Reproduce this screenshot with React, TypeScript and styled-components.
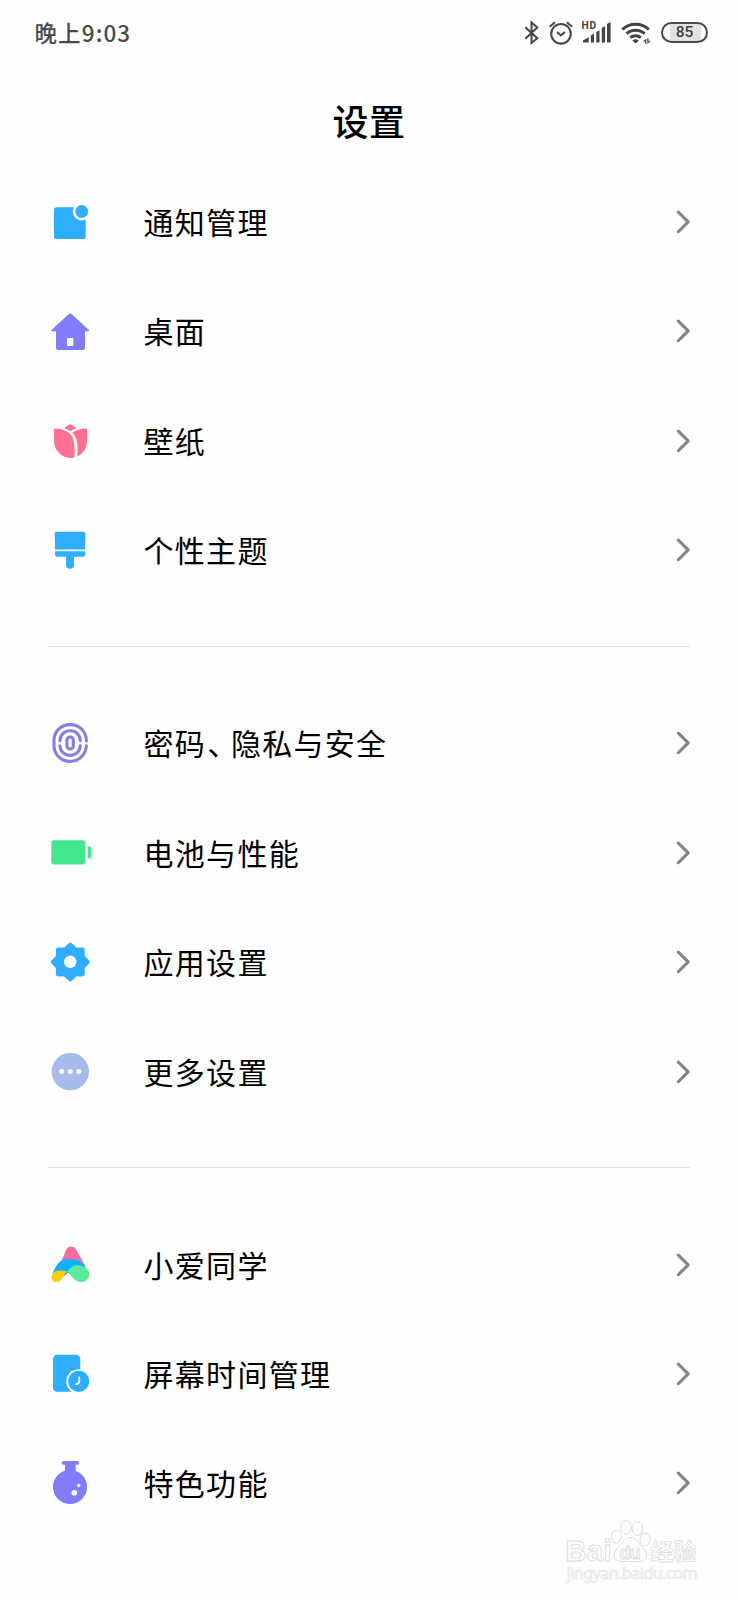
import React from 'react';
import styled, { createGlobalStyle } from 'styled-components';

const GlobalStyle = createGlobalStyle`
  * { box-sizing: border-box; }
  body {
    margin: 0;
    background: #fefefe;
    font-family: "Noto Sans CJK SC", sans-serif;
    color: #000;
  }
`;

const Screen = styled.main`
  position: relative;
  width: 738px;
  height: 1600px;
  overflow: hidden;
  background: #fefefe;
`;

const StatusBar = styled.header`
  display: flex;
  justify-content: space-between;
  align-items: flex-start;
  height: 66px;
  padding: 20px 30px 0 34.5px;
`;

const Clock = styled.span`
  margin-top: -1px;
  font-size: 22.5px;
  line-height: 26px;
  font-weight: 500;
  letter-spacing: 1.1px;
  color: #4a4a4a;
`;

const StatusIcons = styled.div`
  display: flex;
  gap: 9px;
  svg { display: block; }
`;

const BatteryPill = styled.div`
  display: flex;
  align-items: center;
  justify-content: center;
  width: 47px;
  height: 21px;
  margin-top: 2px;
  border: 2px solid #4a4a4a;
  border-radius: 11px;
  background: linear-gradient(to right, transparent 7px, #e2e2e2 7px, #e2e2e2 38px, transparent 38px);
  font: 500 15.5px/17px Roboto, sans-serif;
  color: #404040;
`;

const Title = styled.h1`
  height: 101.3px;
  margin: 0;
  padding-top: 26.5px;
  text-align: center;
  font-size: 36px;
  line-height: 54px;
  letter-spacing: 0.4px;
  font-weight: 500;
`;

const Row = styled.div`
  display: flex;
  align-items: center;
  height: 109.4px;
  padding: 0 46px;
  svg { display: block; flex: none; }
`;

const Label = styled.span`
  flex: 1;
  margin: -2px 0 0 49.5px;
  font-size: 30px;
  line-height: 44px;
  letter-spacing: 1.3px;
  font-weight: 400;
`;

const TightMark = styled.span`
  margin: 0 7px 0 1.5px;
  font-feature-settings: "halt";
`;

const Divider = styled.hr`
  height: 1px;
  margin: 41px 48px 41.8px;
  border: 0;
  background: #e4e4e4;
`;

const Watermark = styled.svg`
  position: absolute;
  left: 560px;
  top: 1515px;
`;

const BLUE = '#2fadff';
const VIOLET = '#817df9';

const Glyph = ({ children }: { children: React.ReactNode }) => (
  <svg width="48" height="48" viewBox="0 0 48 48">{children}</svg>
);

const icons: Record<string, React.ReactNode> = {
  notify: (
    <>
      <rect x="8" y="9.3" width="31.7" height="31.7" rx="2.6" fill={BLUE} />
      <circle cx="35.7" cy="13.5" r="9" fill="#fefefe" />
      <circle cx="35.7" cy="13.5" r="6.4" fill={BLUE} />
    </>
  ),
  home: (
    <>
      <path
        d="M22.9 6.9Q24.2 5.9 25.5 6.9L43 23Q43.700 24.100 42.500 24.300H39V40.800Q39 43 36.800 43H12.200Q10 43 10 40.800V24.300H6Q4.700 24.100 5.400 23Z"
        fill={VIOLET}
      />
      <rect x="21" y="30.9" width="6.3" height="8" rx="1.2" fill="#fff" />
    </>
  ),
  tulip: (
    <g fill="#ff7092">
      <path d="M8 12.600Q8 11.300 9.300 11.400C17 12 24 14.500 26.600 20.500C28.700 26 29.200 34 28.200 40.800C17 42.200 8 34.500 8 24Z" />
      <path d="M26.400 15.800C29.500 12.800 34 11.600 39.800 11.400Q41 11.300 41 12.600V24C41 31 37.500 36.500 31 39.500C31.900 33 31.800 27 30.400 22.500Q29.200 18.500 26.400 15.800Z" />
      <path d="M18 11.300L22.600 7.700Q24 6.700 25.400 7.700L30.200 11.200Q27 12.200 24.500 14.300Q21.500 12.200 18 11.300Z" />
    </g>
  ),
  brush: (
    <g fill={BLUE}>
      <path d="M10.700 5.700H37.300Q39.400 5.700 39.400 7.800L39 23.600H9.100L8.700 7.800Q8.700 5.700 10.700 5.700Z" />
      <path d="M9.100 25.200H39.200V28.700Q39.200 30.800 37.100 30.800H28V38.700A4 4 0 0 1 20 38.700V30.800H11.200Q9.100 30.800 9.100 28.700Z" />
    </g>
  ),
  finger: (
    <g fill="none" stroke="#8580de" strokeWidth="3.100" strokeLinecap="round" transform="translate(0 0.500)">
      <path d="M40.400 21.500C40.400 12 33.300 5.100 24.200 5.100S8 12 8 21V26C8 35 15.100 41.900 24.200 41.900C32.500 41.900 39.400 36 40.400 26.300" />
      <path d="M13.900 21.300C13.900 15.500 18.300 11.300 24.100 11.300S34.300 15.500 34.300 21.300" />
      <path d="M13.900 26.300C14.200 32 18.500 35.900 24.100 35.900S34 32 34.300 26.300" />
      <rect x="20.900" y="17.500" width="6.400" height="12" rx="3.200" />
    </g>
  ),
  battery: (
    <g fill="#43e58d">
      <rect x="5.300" y="11.200" width="33.700" height="24.300" rx="2.700" />
      <rect x="41.700" y="17.200" width="3.300" height="12.300" rx="1.500" />
    </g>
  ),
  gear: (
    <>
      <path
        d="M12 9.600H18.300L22.700 5.200Q24.300 3.800 25.900 5.200L30.300 9.600H36.600Q38.700 9.600 38.700 11.700V18L43.100 22.400Q44.500 24 43.100 25.600L38.700 30V36.300Q38.700 38.400 36.600 38.400H30.300L25.900 42.800Q24.300 44.200 22.700 42.800L18.300 38.400H12Q9.900 38.400 9.900 36.300V30L5.500 25.600Q4.100 24 5.500 22.400L9.900 18V11.700Q9.900 9.600 12 9.600Z"
        fill={BLUE}
      />
      <circle cx="24.200" cy="23.800" r="6.200" fill="#fff" />
    </>
  ),
  more: (
    <>
      <circle cx="24.300" cy="23.600" r="18.700" fill="#a6bbe9" />
      <g fill="#fff">
        <circle cx="15.700" cy="23.600" r="2.500" />
        <circle cx="24.200" cy="23.600" r="2.500" />
        <circle cx="32.800" cy="23.600" r="2.500" />
      </g>
    </>
  ),
  assistant: (
    <g transform="translate(0 -0.600)">
      <path d="M14 24L20 9.800Q21.500 6.200 25.200 6.200T30.500 9.800L39.500 26L37 28Z" fill="#fc6ba3" />
      <path d="M6.500 32.500C10 26 13 18.300 22 18.300C30 18.200 36 20.500 39.600 26.500L36 33L24 30.500L14 39Z" fill="#0eb2fb" />
      <path d="M20.800 31.400C25.500 25.500 30 23.500 35 25.300C40 26.500 43.400 29.500 43.300 33.500C43.300 38.500 39.500 41.700 35 41.700C28.500 41.700 26 35 20.800 31.400Z" fill="#5bea9b" />
      <path d="M20.800 31.400C18 29.600 10.500 29.300 7.800 31.800C5.500 34.500 5 38 6.500 40C8 42 12 42.200 14.500 40C16.800 38 18.500 33.500 20.800 31.400Z" fill="#fbcb12" />
    </g>
  ),
  screen: (
    <g transform="translate(0 -0.300)">
      <rect x="7" y="5" width="27.300" height="37" rx="4.300" fill={BLUE} />
      <circle cx="32.600" cy="31.800" r="12.300" fill="#fefefe" />
      <circle cx="32.800" cy="31.600" r="10.600" fill={BLUE} />
      <path d="M33.300 27.600V31Q33.300 34.200 30 34.400" fill="none" stroke="#fff" strokeWidth="1.800" strokeLinecap="round" />
    </g>
  ),
  flask: (
    <>
      <g fill={VIOLET}>
        <rect x="15.700" y="2" width="17.300" height="3.800" rx="1.900" />
        <rect x="19" y="3" width="10.700" height="12" />
        <circle cx="24" cy="28" r="17.100" />
      </g>
      <circle cx="28.300" cy="33.700" r="2.800" fill="#fff" />
      <circle cx="32.700" cy="26.500" r="1.700" fill="#fff" />
    </>
  ),
};

const groups: { icon: string; label: React.ReactNode }[][] = [
  [
    { icon: 'notify', label: '通知管理' },
    { icon: 'home', label: '桌面' },
    { icon: 'tulip', label: '壁纸' },
    { icon: 'brush', label: '个性主题' },
  ],
  [
    { icon: 'finger', label: <>密码<TightMark>、</TightMark>隐私与安全</> },
    { icon: 'battery', label: '电池与性能' },
    { icon: 'gear', label: '应用设置' },
    { icon: 'more', label: '更多设置' },
  ],
  [
    { icon: 'assistant', label: '小爱同学' },
    { icon: 'screen', label: '屏幕时间管理' },
    { icon: 'flask', label: '特色功能' },
  ],
];

const Chevron = () => (
  <svg width="16" height="26" viewBox="0 0 16 26">
    <path d="M2.300 3.100L12.200 12.900L2.300 22.700" fill="none" stroke="#838383" strokeWidth="3" strokeLinecap="round" strokeLinejoin="round" />
  </svg>
);

const StatusGlyphs = () => (
  <StatusIcons>
    <svg width="15" height="26" viewBox="0 0 15 26" fill="none" stroke="#444" strokeWidth="2">
      <path d="M1.300 7.200L13.300 18.300L7.500 23V2.500L13.300 7.500L1.300 18.700" />
    </svg>
    <svg width="25" height="26" viewBox="0 0 25 26" fill="none" stroke="#4a4a4a" strokeWidth="2.100">
      <circle cx="13" cy="13.800" r="9.800" />
      <path d="M1.600 6.800L7 2.200M18.800 2.200L24.200 6.800" />
      <path d="M9 12L12.800 15.300L16.900 12.200" />
    </svg>
    <svg width="30" height="26" viewBox="0 0 30 26" fill="#444">
      <text x="-0.500" y="9.400" fontFamily="Roboto" fontWeight="700" fontSize="10.200" letterSpacing="0.900">HD</text>
      <path d="M1 22.500V20.500L6.700 17V22.500ZM8.800 22.500V15.500L12 13.500V22.500ZM14.300 22.500V12L17.500 10.300V22.500ZM19.800 22.500V8L23.100 6V22.500ZM25 22.500V4L28.600 2V22.500Z" />
    </svg>
    <svg width="31" height="26" viewBox="0 0 31 26">
      <g fill="none" stroke="#444" strokeWidth="2.900">
        <path d="M1.300 9.500C8.500 2.500 20.700 2.500 27.900 9.500" />
        <path d="M5.500 13.800C10.500 9 18.700 9 23.700 13.800" />
        <path d="M9.300 17.800C12.300 15 16.900 15 19.900 17.800" />
      </g>
      <path d="M11.300 20.500Q14.600 18 17.900 20.500L14.600 23.500Z" fill="#444" />
      <path d="M22.500 21.500L24.800 20V24M26.900 18.300V22.500L29.200 21" fill="none" stroke="#555" strokeWidth="1.300" />
    </svg>
    <BatteryPill>85</BatteryPill>
  </StatusIcons>
);

const App = () => (
  <>
    <GlobalStyle />
    <Screen>
      <StatusBar>
        <Clock>晚上9:03</Clock>
        <StatusGlyphs />
      </StatusBar>
      <Title>设置</Title>
      {groups.map((rows, index) => (
        <React.Fragment key={index}>
          {index > 0 && <Divider />}
          {rows.map((row) => (
            <Row key={row.icon}>
              <Glyph>{icons[row.icon]}</Glyph>
              <Label>{row.label}</Label>
              <Chevron />
            </Row>
          ))}
        </React.Fragment>
      ))}
      <Watermark width="145" height="72" viewBox="0 0 145 72" fill="#fefefe" stroke="#dedede" strokeWidth="1">
        <text x="5.500" y="46" fontFamily="Liberation Sans" fontWeight="700" fontSize="29" textLength="46">Bai</text>
        <ellipse cx="56.500" cy="21.500" rx="5" ry="6.500" />
        <ellipse cx="66" cy="12.500" rx="5.300" ry="6.800" />
        <ellipse cx="77.500" cy="13.500" rx="5.300" ry="6.800" />
        <ellipse cx="85" cy="24.500" rx="5" ry="6.500" />
        <path d="M70.500 22.500C77 22.500 78.500 29 83.500 33.500C89.500 39 86.500 46.500 79.500 46.500H61.500C54 46.500 51 39.500 57 33.500C62.500 28.500 64 22.500 70.500 22.500Z" />
        <text x="59.500" y="43.500" fontFamily="Liberation Sans" fontWeight="700" fontSize="18" textLength="21">du</text>
        <text x="90.500" y="44.800" fontFamily="Noto Sans CJK SC" fontWeight="700" fontSize="23" strokeWidth="0.800">经验</text>
        <text x="6.500" y="64" fontFamily="Noto Sans" fontSize="16" stroke="#e4e4e4" strokeWidth="0.700" textLength="131">jingyan.baidu.com</text>
      </Watermark>
    </Screen>
  </>
);

export default App;
